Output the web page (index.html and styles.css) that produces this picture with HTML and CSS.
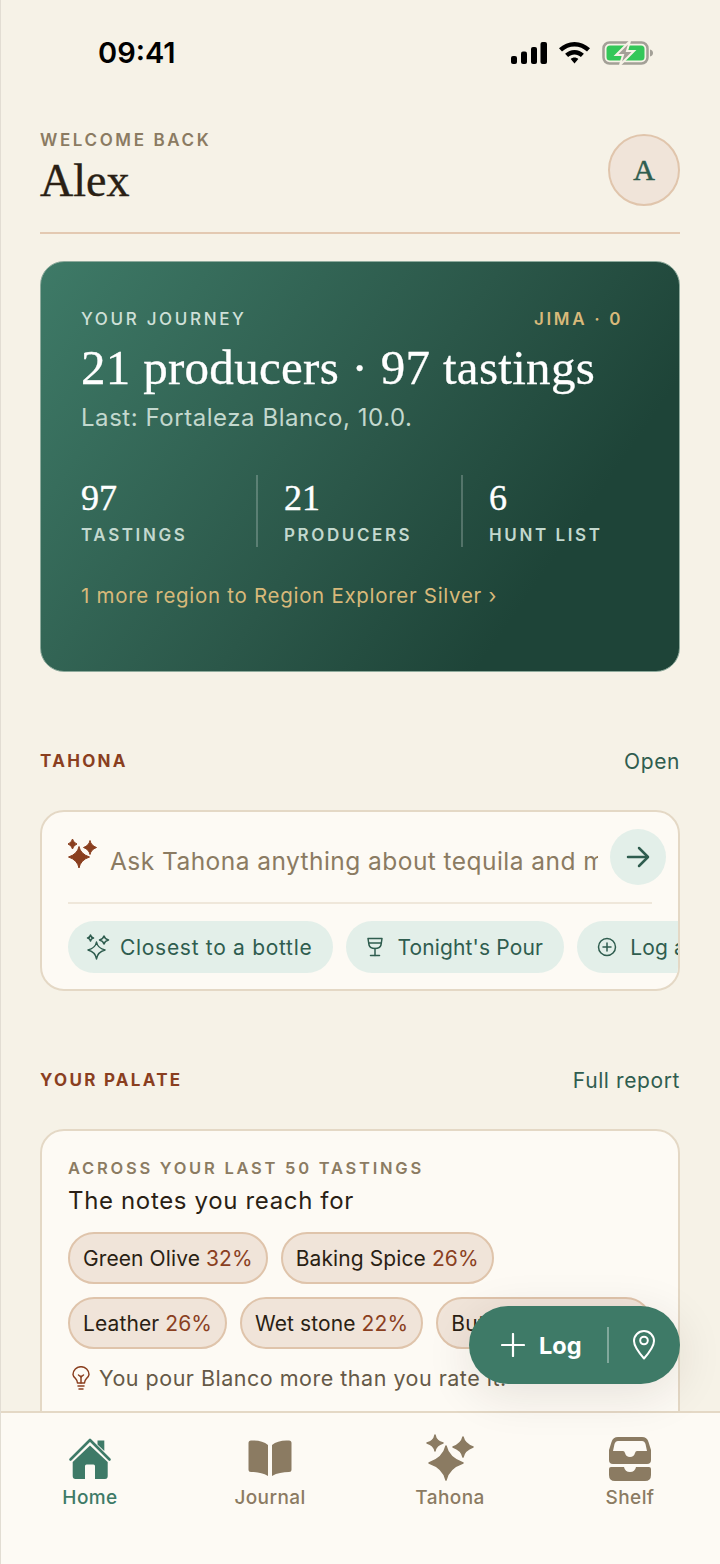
FILE: index.html
```html
<html>
<head>
    <title>Tahona - Home</title>
    <meta name="viewport" content="width=device-width, initial-scale=1.0">
    <link rel="stylesheet" href="styles.css">
</head>
<body>
    <div class="phone">
        <div class="scroll">
            <div class="status-bar">
                <span class="time">09:41</span>
                <div class="status-icons">
                    <svg width="36" height="22" viewBox="0 0 36 22"><rect x="0" y="14" width="6" height="8" rx="2"/><rect x="10" y="9.500" width="6" height="12.500" rx="2"/><rect x="20" y="5" width="6" height="17" rx="2"/><rect x="29.500" y="0" width="6.500" height="22" rx="2"/></svg>
                    <svg width="31" height="22" viewBox="0 0 31 22"><path d="M15.500 0C9.500 0 4.300 2.400 0 6.300L3 9.500C6.500 6.300 10.700 4.400 15.500 4.400S24.500 6.300 28 9.500L31 6.300C26.700 2.400 21.500 0 15.500 0Z"/><path d="M15.500 8C11.900 8 8.800 9.400 6.100 11.800L9.100 15C11 13.300 13.100 12.400 15.500 12.400S20 13.300 21.900 15L24.900 11.800C22.200 9.400 19.100 8 15.500 8Z"/><path d="M15.500 15.500C14 15.500 12.800 16 11.700 17L15.500 21.500L19.300 17C18.200 16 17 15.500 15.500 15.500Z"/></svg>
                    <svg width="51" height="24" viewBox="0 0 51 24"><rect x="1.500" y="1.500" width="44" height="21" rx="6" fill="none" stroke="#a3a097" stroke-width="2.500"/><rect x="4.500" y="4.500" width="38" height="15" rx="3.500" fill="#34c759"/><path d="M48 8.500C50 9 51 10.300 51 12S50 15 48 15.500Z" fill="#a3a097"/><path d="M28 0L14 14H21L18 24L32 10H25Z" fill="#a3a097" stroke="#f6f2e7" stroke-width="2"/></svg>
                </div>
            </div>

            <div class="header">
                <div>
                    <div class="eyebrow">WELCOME BACK</div>
                    <h1 class="name">Alex</h1>
                </div>
                <div class="avatar">A</div>
            </div>

            <div class="journey-card">
                <div class="journey-top">
                    <span>YOUR JOURNEY</span>
                    <span class="jima">JIMA · 0</span>
                </div>
                <h2 class="journey-title">21 producers · 97 tastings</h2>
                <p class="journey-last">Last: Fortaleza Blanco, 10.0.</p>
                <div class="stats">
                    <div class="stat">
                        <div class="stat-num">97</div>
                        <div class="stat-label">TASTINGS</div>
                    </div>
                    <div class="stat">
                        <div class="stat-num">21</div>
                        <div class="stat-label">PRODUCERS</div>
                    </div>
                    <div class="stat">
                        <div class="stat-num">6</div>
                        <div class="stat-label">HUNT LIST</div>
                    </div>
                </div>
                <div class="journey-link">1 more region to Region Explorer Silver ›</div>
            </div>

            <div class="section-head tahona-head">
                <span class="section-title">TAHONA</span>
                <span class="section-link">Open</span>
            </div>

            <div class="card ask-card">
                <div class="ask-row">
                    <svg class="ask-spark" width="32" height="32" viewBox="0 0 32 32" fill="#8a3f1f" stroke="#8a3f1f" stroke-width="1" stroke-linejoin="round">
                        <path d="M12 8.500Q13.500 16 22.500 19Q13.500 22 12 30Q10.500 22 1.500 19Q10.500 16 12 8.500Z"/>
                        <path d="M5.500 1Q6.200 4.500 10 6Q6.200 7.500 5.500 11Q4.800 7.500 1 6Q4.800 4.500 5.500 1Z"/>
                        <path d="M23 2.500Q24 7.500 29.500 9.500Q24 11.500 23 16.500Q22 11.500 16.500 9.500Q22 7.500 23 2.500Z"/>
                    </svg>
                    <div class="ask-text">Ask Tahona anything about tequila and more</div>
                    <div class="ask-go">
                        <svg width="28" height="28" viewBox="0 0 28 28" fill="none" stroke="#2f5d4f" stroke-width="2.500" stroke-linecap="round" stroke-linejoin="round"><path d="M4 14H23"/><path d="M15 5L24 14L15 23"/></svg>
                    </div>
                </div>
                <div class="ask-line"></div>
                <div class="chips">
                    <div class="chip chip-closest">
                        <svg width="26" height="26" viewBox="0 0 26 26" fill="none" stroke="#2f5d4f" stroke-width="1.500" stroke-linejoin="round">
                            <path d="M10.500 8Q11.500 14 19 16Q11.500 18 10.500 25Q9.500 18 2 16Q9.500 14 10.500 8Z"/>
                            <path d="M4.500 1Q5 3.500 7.500 4Q5 4.500 4.500 7Q4 4.500 1.500 4Q4 3.500 4.500 1Z"/>
                            <path d="M18 2Q18.800 5 22.500 6Q18.800 7 18 10Q17.200 7 13.500 6Q17.200 5 18 2Z"/>
                        </svg>
                        Closest to a bottle
                    </div>
                    <div class="chip">
                        <svg width="18" height="20" viewBox="0 0 18 20" fill="none" stroke="#2f5d4f" stroke-width="1.500" stroke-linecap="round" stroke-linejoin="round">
                            <path d="M2 1.500H16L15 8Q14 11.500 9 11.500Q4 11.500 3 8Z"/><path d="M2.800 6H15.200"/><path d="M9 11.500V18.500"/><path d="M4.500 18.500H13.500"/>
                        </svg>
                        Tonight's Pour
                    </div>
                    <div class="chip">
                        <svg width="20" height="20" viewBox="0 0 20 20" fill="none" stroke="#2f5d4f" stroke-width="1.500" stroke-linecap="round"><circle cx="10" cy="10" r="8.500"/><path d="M10 6V14"/><path d="M6 10H14"/></svg>
                        Log a tasting
                    </div>
                </div>
            </div>

            <div class="section-head palate-head">
                <span class="section-title">YOUR PALATE</span>
                <span class="section-link">Full report</span>
            </div>

            <div class="card palate-card">
                <div class="eyebrow small">ACROSS YOUR LAST 50 TASTINGS</div>
                <div class="palate-title">The notes you reach for</div>
                <div class="notes">
                    <div class="note">Green Olive <span class="pct">32%</span></div>
                    <div class="note">Baking Spice <span class="pct">26%</span></div>
                </div>
                <div class="notes">
                    <div class="note">Leather <span class="pct">26%</span></div>
                    <div class="note">Wet stone <span class="pct">22%</span></div>
                    <div class="note note-long">Butterscotch <span class="pct">20%</span></div>
                </div>
                <div class="hint">
                    <svg width="18" height="24" viewBox="0 0 18 24" fill="none" stroke="#8a3f1f" stroke-width="1.500" stroke-linecap="round" stroke-linejoin="round">
                        <path d="M5.500 17Q5.500 14.500 3.500 12.500Q1 10 1 8.500A8 7.800 0 0 1 17 8.500Q17 10 14.500 12.500Q12.500 14.500 12.500 17Z"/>
                        <path d="M6 20H12"/><path d="M7 23H11"/><path d="M9 17V10"/><path d="M6.500 9L9 11L11.500 9"/>
                    </svg>
                    You pour Blanco more than you rate it.
                </div>
            </div>
        </div>

        <div class="fab">
            <div class="fab-log">
                <svg width="24" height="24" viewBox="0 0 24 24" fill="none" stroke="#fff" stroke-width="2.200" stroke-linecap="round"><path d="M12 1V23"/><path d="M1 12H23"/></svg>
                Log
            </div>
            <div class="fab-line"></div>
            <svg class="fab-pin" width="22" height="30" viewBox="0 0 22 30" fill="none" stroke="#fff" stroke-width="2" stroke-linejoin="round"><path d="M11 28.500Q1 17 1 11A10 10 0 0 1 21 11Q21 17 11 28.500Z"/><circle cx="11" cy="10.500" r="3.800"/></svg>
        </div>

        <div class="tabbar">
            <div class="tab active">
                <svg width="44" height="44" viewBox="0 0 44 44" fill="#3e7a67">
                    <path d="M22 8.500L39.700 25V39Q39.700 42 37 42H27V29Q27 27.500 25.500 27.500H18.500Q17 27.500 17 29V42H7.500Q4.700 42 4.700 39V25Z"/>
                    <path d="M29.500 3.500H36.300V14L29.500 7.500Z"/>
                    <path d="M2.500 22.500L22 3L41.500 22.500" fill="none" stroke="#3e7a67" stroke-width="2.600" stroke-linecap="round" stroke-linejoin="round"/>
                </svg>
                <span>Home</span>
            </div>
            <div class="tab">
                <svg width="44" height="44" viewBox="0 0 44 44" fill="#8b7b62">
                    <path d="M3 3.500C10 3 16 4.500 20 8V39C15 36 9 35 3 35Q.5 35 .5 32.500V6Q.5 3.500 3 3.500Z"/>
                    <path d="M41 3.500C34 3 28 4.500 24 8V39C29 36 35 35 41 35Q43.500 35 43.500 32.500V6Q43.500 3.500 41 3.500Z"/>
                </svg>
                <span>Journal</span>
            </div>
            <div class="tab">
                <svg class="tab-spark" width="50" height="50" viewBox="0 0 50 50" fill="#8b7b62" stroke="#8b7b62" stroke-width="1.500" stroke-linejoin="round">
                    <path d="M21 12Q23.500 24 38 29Q23.500 34 21 46Q18.500 34 4 29Q18.500 24 21 12Z"/>
                    <path d="M10 1Q11 7 18 9Q11 11 10 17Q9 11 2 9Q9 7 10 1Z"/>
                    <path d="M38 3Q39.500 10 48 13Q39.500 16 38 23Q36.500 16 28 13Q36.500 10 38 3Z"/>
                </svg>
                <span>Tahona</span>
            </div>
            <div class="tab">
                <svg width="42" height="44" viewBox="0 0 42 44" fill="#8b7b62">
                    <path fill-rule="evenodd" d="M9 0H33Q38 0 39.500 5L42 13V23Q42 27 38 27H4Q0 27 0 23V13L2.500 5Q4 0 9 0ZM9 4Q6.500 4 5.500 7L4 14H14Q15.500 14 16 16Q17 20 21 20Q25 20 26 16Q26.500 14 28 14H38L36.500 7Q35.500 4 33 4Z"/>
                    <path d="M2 30H15Q16 35 21 35Q26 35 27 30H40Q42 30 42 32V38Q42 44 36 44H6Q0 44 0 38V32Q0 30 2 30Z"/>
                </svg>
                <span>Shelf</span>
            </div>
        </div>
    </div>
</body>
</html>
```

FILE: styles.css
```css
body {
    margin: 0;
    padding: 0;
    font-family: Inter, "Open Sans", sans-serif;
    background-color: #f6f2e7;
    color: #2a1f14;
}
.phone {
    position: relative;
    height: 1564px;
    display: flex;
    flex-direction: column;
    overflow: hidden;
    border-left: 1px solid #e2ddd3;
    box-sizing: border-box;
}
.scroll {
    flex: 1;
    min-height: 0;
    overflow: hidden;
    padding: 0 40px 0 39px;
}
.status-bar {
    height: 106px;
    display: flex;
    justify-content: space-between;
    align-items: flex-start;
    padding: 41px 27px 0 58px;
    box-sizing: border-box;
}
.time {
    font-family: Inter, sans-serif;
    font-size: 29px;
    font-weight: 600;
    line-height: 24px;
    color: #000;
}
.status-icons {
    display: flex;
    align-items: center;
    gap: 12px;
}
.status-icons svg {
    display: block;
}
.header {
    display: flex;
    justify-content: space-between;
    align-items: flex-start;
    padding: 22px 0 0;
    border-bottom: 2px solid #e3c9b2;
    height: 128px;
    box-sizing: border-box;
}
.eyebrow {
    font-size: 17px;
    font-weight: 600;
    letter-spacing: 2.6px;
    color: #8b7b62;
    line-height: 24px;
}
.name {
    margin: 4px 0 0;
    font-family: "Liberation Serif", serif;
    font-size: 46px;
    font-weight: 400;
    line-height: 50px;
    -webkit-text-stroke: 0.4px #2a1f14;
}
.avatar {
    width: 72px;
    height: 72px;
    margin-top: 6px;
    border: 2px solid #e0c5ac;
    border-radius: 50%;
    background: #f0e4d9;
    box-sizing: border-box;
    display: flex;
    align-items: center;
    justify-content: center;
    font-family: "Liberation Serif", serif;
    font-size: 30px;
    color: #2f5d4f;
    -webkit-text-stroke: 0.5px #2f5d4f;
}
.journey-card {
    margin-top: 27px;
    height: 411px;
    padding: 45px 40px 0;
    box-sizing: border-box;
    border: 1px solid #8eaa9c;
    border-radius: 24px;
    background: linear-gradient(125deg, #3e7a67 0%, #2b5749 50%, #1e4438 78%);
    color: #fff;
}
.journey-top {
    display: flex;
    justify-content: space-between;
    padding-right: 16px;
    font-size: 17px;
    font-weight: 500;
    letter-spacing: 2.65px;
    line-height: 24px;
    color: #cfe0d8;
}
.jima {
    color: #d8b97a;
    font-weight: 600;
}
.journey-title {
    margin: 10px 0 0;
    font-family: "Liberation Serif", serif;
    font-size: 49px;
    font-weight: 400;
    letter-spacing: 0.3px;
    line-height: 54px;
    white-space: nowrap;
    -webkit-text-stroke: 0.3px #fff;
}
.journey-last {
    margin: 7px 0 0;
    font-size: 24px;
    letter-spacing: 0.55px;
    line-height: 32px;
    color: #c3d8ce;
}
.stats {
    display: grid;
    grid-template-columns: 175px 205px 1fr;
    margin-top: 41px;
}
.stat {
    height: 72px;
    padding-top: 4px;
    box-sizing: border-box;
}
.stat + .stat {
    border-left: 2px solid rgba(255, 255, 255, 0.22);
    padding-left: 26px;
}
.stat-num {
    font-family: "Liberation Serif", serif;
    font-size: 36px;
    line-height: 38px;
    color: #fff;
    -webkit-text-stroke: 0.4px #fff;
}
.stat-label {
    margin-top: 7px;
    font-size: 17px;
    font-weight: 600;
    letter-spacing: 2.6px;
    line-height: 22px;
    color: #c3d8ce;
}
.journey-link {
    margin-top: 35px;
    font-size: 20.500px;
    letter-spacing: 0.7px;
    line-height: 28px;
    color: #d8b97a;
}
.section-head {
    display: flex;
    justify-content: space-between;
    align-items: center;
    height: 28px;
}
.tahona-head {
    margin-top: 75px;
}
.palate-head {
    margin-top: 75px;
}
.section-title {
    font-size: 17px;
    font-weight: 700;
    letter-spacing: 2.3px;
    color: #8a3f1f;
}
.section-link {
    font-size: 21px;
    letter-spacing: 0.6px;
    color: #2f5d4f;
}
.card {
    background: #fdfaf4;
    border: 2px solid #e4d8c5;
    border-radius: 24px;
    box-sizing: border-box;
}
.ask-card {
    margin-top: 35px;
    height: 181px;
    padding: 17px 0 0 26px;
    overflow: hidden;
}
.ask-row {
    display: flex;
    align-items: center;
    height: 56px;
    padding-right: 12px;
}
.ask-spark {
    flex: none;
    margin: -6px 11px 0 -1px;
}
.ask-text {
    flex: 1;
    min-width: 0;
    overflow: hidden;
    white-space: nowrap;
    font-size: 24.500px;
    letter-spacing: 0.45px;
    color: #8b7b62;
    margin-top: 8px;
}
.ask-go {
    flex: none;
    width: 56px;
    height: 56px;
    margin-left: 12px;
    border-radius: 50%;
    background: #e3efe9;
    display: flex;
    align-items: center;
    justify-content: center;
}
.ask-line {
    height: 2px;
    margin: 17px 26px 0 0;
    background: #efe7da;
}
.chips {
    display: flex;
    gap: 13px;
    margin-top: 17px;
}
.chip {
    flex: none;
    height: 52px;
    padding: 0 21px 0 20px;
    display: flex;
    align-items: center;
    gap: 13px;
    border-radius: 26px;
    background: #e3efe9;
    font-size: 21px;
    letter-spacing: 0.15px;
    color: #2f5d4f;
    white-space: nowrap;
}
.chip-closest {
    padding-left: 18px;
    gap: 8px;
    letter-spacing: 0.7px;
}
.palate-card {
    margin-top: 35px;
    height: 320px;
    padding: 25px 26px 0;
}
.eyebrow.small {
    font-size: 16.500px;
    letter-spacing: 2.75px;
    line-height: 24px;
}
.palate-title {
    margin-top: 5px;
    font-size: 24px;
    letter-spacing: 0.65px;
    line-height: 32px;
}
.notes {
    display: flex;
    gap: 13px;
    margin-top: 13px;
}
.palate-title + .notes {
    margin-top: 15px;
}
.note {
    flex: none;
    height: 52px;
    padding: 0 13px;
    display: flex;
    align-items: center;
    gap: 6px;
    box-sizing: border-box;
    border: 2px solid #dfc4ab;
    border-radius: 26px;
    background: #f0e4d9;
    font-size: 21px;
    letter-spacing: 0.1px;
    white-space: nowrap;
}
.note-long {
    letter-spacing: 0.5px;
}
.pct {
    color: #8a3f1f;
}
.hint {
    display: flex;
    align-items: center;
    gap: 9px;
    margin: 14px 0 0 4px;
    font-size: 21.500px;
    letter-spacing: 0.5px;
    line-height: 30px;
    color: #655947;
    white-space: nowrap;
}
.fab {
    position: absolute;
    left: 468px;
    top: 1306px;
    width: 211px;
    height: 78px;
    padding-left: 32px;
    box-sizing: border-box;
    display: flex;
    align-items: center;
    border-radius: 39px;
    background: #3e7a67;
    box-shadow: 0 10px 48px rgba(42, 31, 20, 0.11);
}
.fab-log {
    display: flex;
    align-items: center;
    gap: 14px;
    font-size: 23.500px;
    font-weight: 700;
    color: #fff;
}
.fab-line {
    width: 2px;
    height: 36px;
    margin-left: 25px;
    background: rgba(255, 255, 255, 0.35);
}
.fab-pin {
    margin-left: 24px;
}
.tabbar {
    flex: none;
    height: 153px;
    padding-top: 24px;
    box-sizing: border-box;
    display: grid;
    grid-template-columns: repeat(4, 180px);
    margin-left: -1px;
    background: #fdfaf4;
    border-top: 2px solid #e4d8c5;
}
.tab {
    display: flex;
    flex-direction: column;
    align-items: center;
    font-size: 19px;
    font-weight: 500;
    letter-spacing: 0.4px;
    line-height: 26px;
    color: #8b7b62;
}
.tab svg {
    display: block;
    margin-bottom: 4px;
}
.tab .tab-spark {
    margin-top: -3px;
    margin-bottom: 1px;
}
.tab.active {
    color: #3e7a67;
}
```
